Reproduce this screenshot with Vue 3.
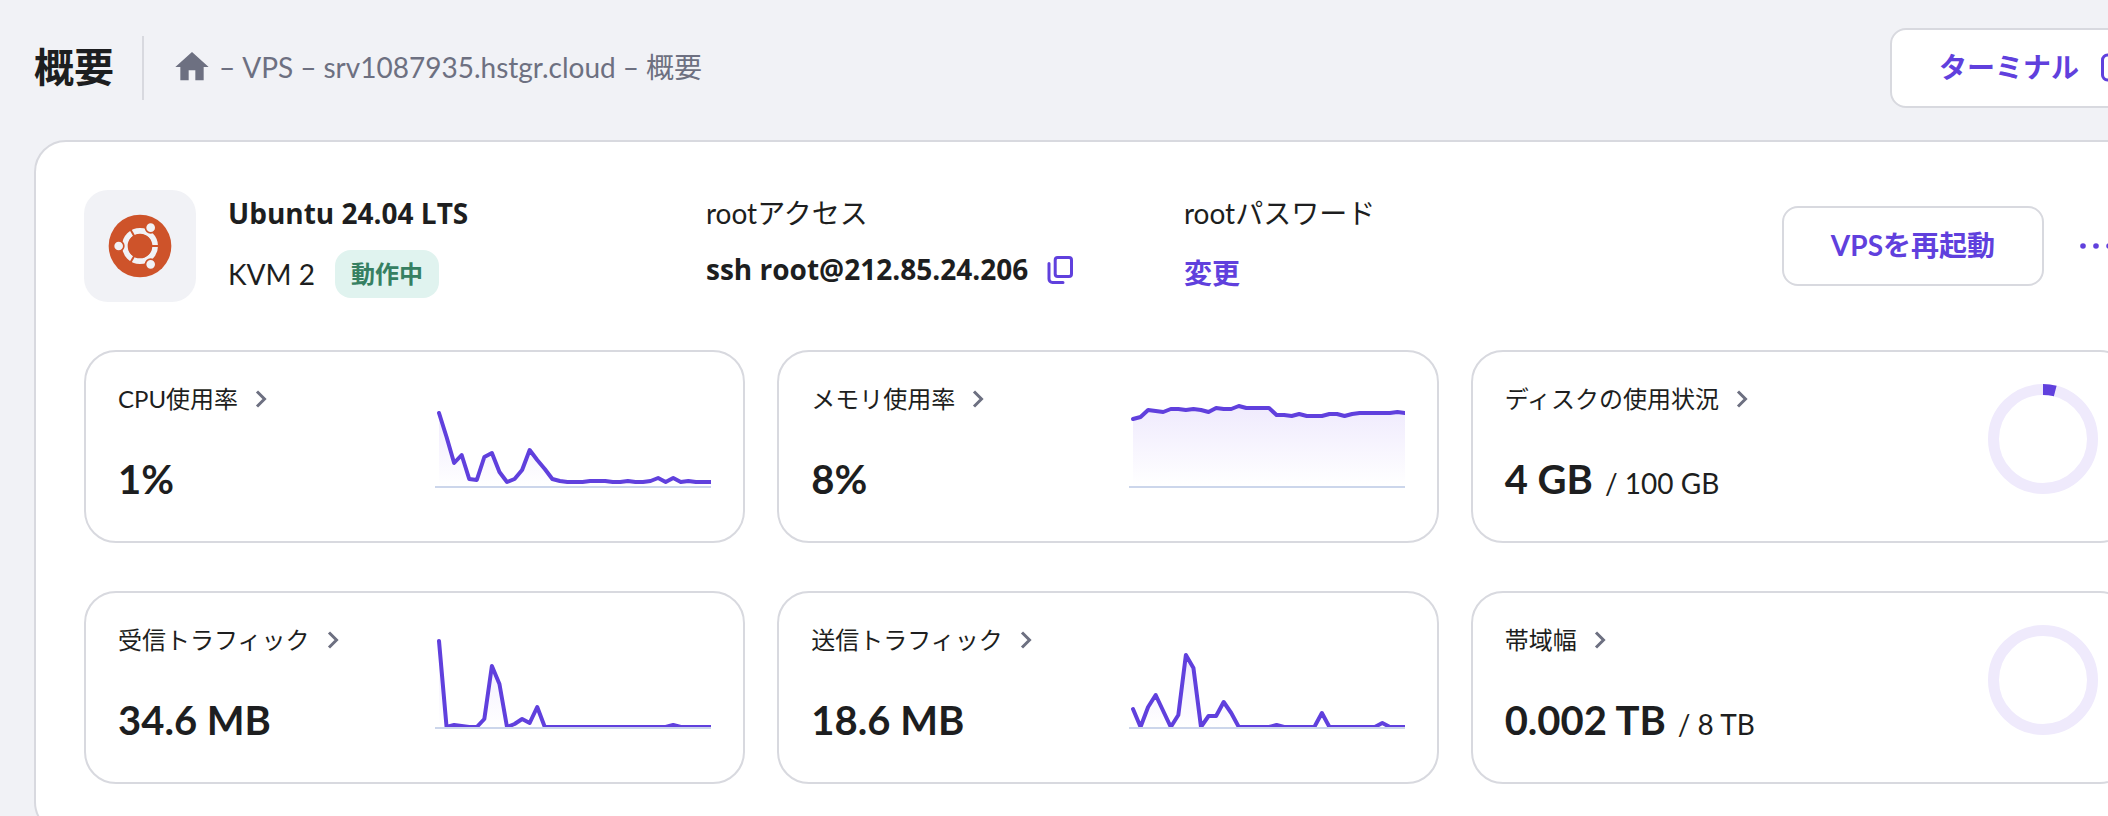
<script setup>
const STEP = 272 / 36
const BASE = 88

const pad = (values) => [...values, ...Array(37 - values.length).fill(0)]

const metrics = [
  {
    id: 'cpu', label: 'CPU使用率', value: '1%',
    points: [73, 49, 23, 31, 7, 6, 29, 33, 14, 4, 7, 16, 36, 26, 17, 7, 5, 4, 4, 4, 5, 5, 5, 4, 4, 5, 4, 4, 5, 8, 4, 8, 4, 5, 4, 4, 4],
  },
  {
    id: 'memory', label: 'メモリ使用率', value: '8%',
    points: [67, 69, 76, 75, 74, 77, 77, 76, 77, 76, 74, 78, 77, 77, 80, 78, 78, 78, 78, 71, 71, 70, 72, 70, 70, 70, 72, 72, 70, 72, 73, 73, 73, 73, 73, 74, 73],
  },
  { id: 'disk', label: 'ディスクの使用状況', value: '4 GB', limit: '/ 100 GB', percent: 4 },
  {
    id: 'incoming', label: '受信トラフィック', value: '34.6 MB',
    points: pad([86, 0, 2, 1, 0, 0, 8, 61, 43, 0, 3, 8, 4, 20, 0, 0, 0, 0, 0, 0, 0, 0, 0, 0, 0, 0, 0, 0, 0, 0, 0, 2]),
  },
  {
    id: 'outgoing', label: '送信トラフィック', value: '18.6 MB',
    points: pad([18, 0, 20, 32, 16, 0, 12, 72, 59, 0, 11, 11, 25, 14, 0, 0, 0, 0, 0, 2, 0, 0, 0, 0, 0, 14, 0, 0, 0, 0, 0, 0, 0, 4]),
  },
  { id: 'bandwidth', label: '帯域幅', value: '0.002 TB', limit: '/ 8 TB', percent: 0 },
]

const line = (points) =>
  points.map((p, i) => `${i ? 'L' : 'M'}${(4 + i * STEP).toFixed(2)} ${BASE - p}`).join('')
const area = (points) => `${line(points)}L276 ${BASE}L4 ${BASE}Z`
</script>

<template>
  <div class="viewport">
    <div class="page">
      <header class="topbar">
        <h1>概要</h1>
        <nav class="crumbs" aria-label="パンくずリスト">
          <a href="#" aria-label="ホーム">
            <svg class="home" viewBox="0 0 24 24"><path d="M10 20v-6h4v6h5v-8h3L12 3 2 12h3v8z" /></svg>
          </a>
          <span>–</span>
          <a href="#">VPS</a>
          <span>–</span>
          <a href="#">srv1087935.hstgr.cloud</a>
          <span>–</span>
          <span>概要</span>
        </nav>
        <button class="btn terminal" type="button">
          ターミナル
          <svg class="external" viewBox="0 0 36 36">
            <path d="M16 6H10.500a5 5 0 0 0-5 5V26a5 5 0 0 0 5 5H26a5 5 0 0 0 5-5V20M21 6h10v10M31 6 17 20" />
          </svg>
        </button>
      </header>

      <main class="panel">
        <section class="server">
          <div class="os">
            <svg viewBox="0 0 192 192" role="img" aria-label="Ubuntu">
              <circle class="brand" cx="96" cy="96" r="94" />
              <circle class="ring" cx="96" cy="96" r="45.500" />
              <g class="gaps">
                <path d="M96 96H156" />
                <path d="M96 96H156" transform="rotate(120 96 96)" />
                <path d="M96 96H156" transform="rotate(240 96 96)" />
              </g>
              <circle class="brand" cx="96" cy="96" r="36" />
              <g class="heads">
                <circle cx="32" cy="96" r="15.500" />
                <circle cx="128" cy="41" r="15.500" />
                <circle cx="128" cy="151" r="15.500" />
              </g>
            </svg>
          </div>
          <div class="facts">
            <div class="fact spaced">
              <strong>Ubuntu 24.04 LTS</strong>
              <div class="inline plan"><span>KVM 2</span><span class="badge">動作中</span></div>
            </div>
            <div class="fact">
              <span>rootアクセス</span>
              <div class="inline">
                <strong>ssh root@212.85.24.206</strong>
                <button class="icon-btn" type="button" aria-label="コピー">
                  <svg class="copy" viewBox="0 0 32 32">
                    <rect x="11.200" y="4.500" width="16.300" height="19" rx="2.500" />
                    <path d="M5 10.500V26a3.500 3.500 0 0 0 3.500 3.500H19" />
                  </svg>
                </button>
              </div>
            </div>
            <div class="fact spaced">
              <span>rootパスワード</span>
              <a class="change" href="#">変更</a>
            </div>
            <div class="actions">
              <button class="btn" type="button">VPSを再起動</button>
              <button class="icon-btn more" type="button" aria-label="その他">
                <svg viewBox="0 0 40 40">
                  <circle cx="7" cy="20" r="2.800" /><circle cx="20" cy="20" r="2.800" /><circle cx="33" cy="20" r="2.800" />
                </svg>
              </button>
            </div>
          </div>
        </section>

        <section class="metrics">
          <article v-for="m in metrics" :key="m.id" class="metric">
            <div class="metric-text">
              <a class="label" href="#">
                {{ m.label }}
                <svg class="chevron" viewBox="0 0 12 20"><path d="M2 2.500 9.500 10 2 17.500" /></svg>
              </a>
              <p class="value"><strong>{{ m.value }}</strong><span v-if="m.limit">{{ m.limit }}</span></p>
            </div>
            <svg v-if="m.points" class="chart" viewBox="0 0 276 97">
              <defs>
                <linearGradient :id="`fill-${m.id}`" x1="0" y1="0" x2="0" y2="1">
                  <stop offset="0" stop-color="#efeafd" />
                  <stop offset="1" stop-color="#fff" />
                </linearGradient>
                <clipPath :id="`clip-${m.id}`"><rect x="0" y="-4" width="276" height="92" /></clipPath>
              </defs>
              <rect class="axis" x="0" y="88" width="276" height="2" />
              <g :clip-path="`url(#clip-${m.id})`">
                <path :d="area(m.points)" :fill="`url(#fill-${m.id})`" />
                <path class="line" :d="line(m.points)" />
              </g>
            </svg>
            <svg v-else class="donut" viewBox="0 0 110 110">
              <circle class="track" cx="55" cy="55" r="49.500" />
              <circle
                v-if="m.percent" class="share" cx="55" cy="55" r="49.500" pathLength="100"
                :stroke-dasharray="`${m.percent} 100`" transform="rotate(-90 55 55)"
              />
            </svg>
          </article>
        </section>
      </main>
    </div>
  </div>
</template>

<style>
body {
  margin: 0;
  background: #f1f2f6;
}
</style>

<style scoped>
* {
  box-sizing: border-box;
}
.viewport {
  height: 100vh;
  overflow: hidden;
  background: #f1f2f6;
  color: #1d1e20;
  font-family: Lato, "Noto Sans CJK JP", sans-serif;
  font-size: 28px;
  line-height: 46px;
}
.page {
  width: calc(100% + 108px);
  padding: 28px 34px;
}
a {
  color: inherit;
  text-decoration: none;
}
button {
  font: inherit;
  cursor: pointer;
}
svg {
  display: block;
  flex: none;
}
strong {
  font-weight: 700;
}
.topbar {
  display: flex;
  align-items: center;
  margin-bottom: 32px;
}
h1 {
  margin: 0;
  padding: 0 28px 2px 0;
  border-right: 2px solid #d8d9df;
  font-size: 40px;
  line-height: 62px;
}
.crumbs {
  display: flex;
  align-items: center;
  gap: 7px;
  margin-left: 28px;
  padding-bottom: 2px;
  color: #6d7081;
}
.home {
  width: 40px;
  height: 40px;
  fill: #6d7081;
}
.btn {
  display: flex;
  align-items: center;
  height: 80px;
  padding: 0 47px 2px;
  border: 2px solid #d8d9df;
  border-radius: 16px;
  background: #fff;
  color: #6040dd;
  font-weight: 700;
  white-space: nowrap;
}
.terminal {
  gap: 18px;
  margin-left: auto;
}
.external {
  width: 36px;
  height: 36px;
  fill: none;
  stroke: #6040dd;
  stroke-width: 3;
}
.panel {
  padding: 48px;
  border: 2px solid #d8d9df;
  border-radius: 32px;
  background: #fff;
}
.server {
  display: flex;
  gap: 32px;
  margin-bottom: 48px;
}
.os {
  display: flex;
  flex: none;
  align-items: center;
  justify-content: center;
  width: 112px;
  height: 112px;
  border-radius: 24px;
  background: #f1f2f6;
}
.os svg {
  width: 64px;
  height: 64px;
}
.brand {
  fill: #ce532a;
}
.ring {
  fill: none;
  stroke: #f1f2f6;
  stroke-width: 17;
}
.gaps {
  stroke: #ce532a;
  stroke-width: 6;
}
.heads {
  fill: #f1f2f6;
  stroke: #ce532a;
  stroke-width: 5;
}
.facts {
  display: grid;
  flex: 1;
  grid-template-columns: repeat(3, minmax(0, 478fr)) minmax(0, 470fr);
}
.fact {
  display: flex;
  flex-direction: column;
  align-items: flex-start;
  gap: 10px;
}
.fact strong {
  font-family: "Open Sans", "Noto Sans CJK JP", sans-serif;
}
.spaced {
  gap: 14px;
}
.inline {
  display: flex;
  align-items: center;
  gap: 16px;
  white-space: nowrap;
}
.plan {
  gap: 20px;
}
.badge {
  padding: 0 16px;
  border-radius: 16px;
  background: #e0f3ef;
  color: #368062;
  font-size: 24px;
  line-height: 48px;
  font-weight: 700;
}
.icon-btn {
  display: flex;
  align-items: center;
  justify-content: center;
  padding: 0;
  border: 0;
  background: none;
}
.copy {
  width: 32px;
  height: 32px;
  fill: none;
  stroke: #6040dd;
  stroke-width: 3;
  stroke-linecap: round;
}
.change {
  color: #6040dd;
  font-weight: 700;
}
.actions {
  display: flex;
  align-items: center;
  justify-content: flex-end;
  gap: 16px;
}
.more {
  width: 72px;
  height: 80px;
}
.more svg {
  width: 40px;
  height: 40px;
  fill: #6040dd;
}
.metrics {
  display: grid;
  grid-template-columns: repeat(3, minmax(0, 1fr));
  gap: 48px 32px;
}
.metric {
  display: flex;
  align-items: center;
  justify-content: space-between;
  min-height: 193px;
  padding: 32px;
  border: 2px solid #d8d9df;
  border-radius: 32px;
}
.metric-text {
  display: flex;
  flex-direction: column;
  align-self: stretch;
  justify-content: space-between;
}
.label {
  display: flex;
  align-items: center;
  gap: 17px;
  font-size: 24px;
  line-height: 30px;
  white-space: nowrap;
}
.chevron {
  width: 12px;
  height: 20px;
  fill: none;
  stroke: #6d7081;
  stroke-width: 3;
}
.value {
  display: flex;
  align-items: baseline;
  gap: 12px;
  margin: 0;
  line-height: 32px;
  white-space: nowrap;
}
.value strong {
  font-size: 40px;
  line-height: 60px;
}
.chart {
  width: 276px;
  height: 97px;
  overflow: visible;
}
.axis {
  fill: #ccd6eb;
}
.line {
  fill: none;
  stroke: #6040dd;
  stroke-width: 4;
  stroke-linecap: round;
  stroke-linejoin: round;
}
.donut {
  align-self: flex-start;
  width: 110px;
  height: 110px;
}
.track,
.share {
  fill: none;
  stroke: #efeafc;
  stroke-width: 11;
}
.share {
  stroke: #6040dd;
}
</style>
